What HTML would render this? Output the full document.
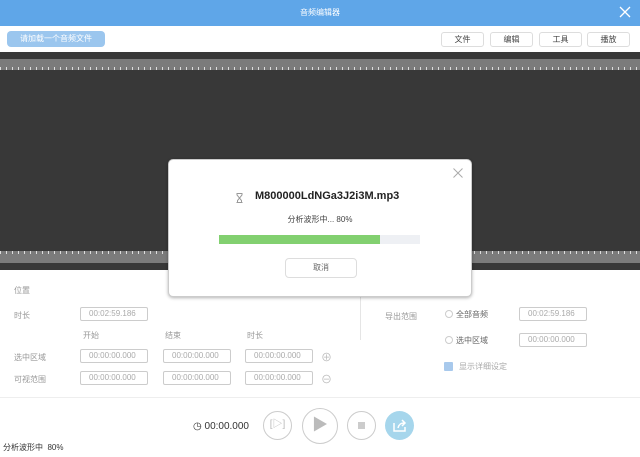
<!DOCTYPE html>
<html><head><meta charset="utf-8"><style>
*{margin:0;padding:0;box-sizing:border-box}
body{width:640px;height:457px;overflow:hidden;background:#fff;font-family:"Liberation Sans","Noto Sans CJK SC",sans-serif;font-size:9px;color:#888;position:relative}
.a{position:absolute}
.inp{position:absolute;height:14px;border:1px solid #ccc;border-radius:2px;font-size:8px;color:#aaa;padding-left:8px;line-height:12px;width:68px}
.btn{position:absolute;top:32px;height:15px;width:43px;border:1px solid #ddd;border-radius:3px;font-size:8px;color:#444;text-align:center;line-height:13px}
.lbl{position:absolute;font-size:8px;color:#999}
.circ{position:absolute;border:1.5px solid #ccc;border-radius:50%}
.tick{position:absolute;left:0;width:640px;height:3px;background:repeating-linear-gradient(90deg,#ddd 0 1px,transparent 1px 6px)}
</style></head><body>
<div class="a" style="left:0;top:0;width:640px;height:26px;background:#5fa6e8"></div>
<div class="a" style="left:0;top:7px;width:640px;text-align:center;color:#fff;font-size:8px">音频编辑器</div>
<svg class="a" style="left:506px;top:7px" width="12" height="12"></svg>
<svg class="a" style="left:619px;top:6px" width="12" height="12"><path d="M1 1L11 11M11 1L1 11" stroke="#fff" stroke-width="1.3"/></svg>
<div class="a" style="left:7px;top:31px;width:98px;height:16px;background:#9bc6ee;border-radius:4px;color:#fff;font-size:8px;text-align:center;line-height:16px">请加载一个音频文件</div>
<div class="btn" style="left:441px">文件</div>
<div class="btn" style="left:490px">编辑</div>
<div class="btn" style="left:539px">工具</div>
<div class="btn" style="left:587px">播放</div>
<div class="a" style="left:0;top:52px;width:640px;height:218px;background:#383838"></div>
<div class="a" style="left:0;top:59px;width:640px;height:11px;background:#7b7b7b"></div>
<div class="tick" style="top:67px"></div>
<div class="a" style="left:0;top:251px;width:640px;height:12px;background:#7b7b7b"></div>
<div class="tick" style="top:251px"></div>
<div class="lbl" style="left:14px;top:285px">位置</div>
<div class="lbl" style="left:14px;top:310px">时长</div>
<div class="inp" style="left:80px;top:307px">00:02:59.186</div>
<div class="lbl" style="left:83px;top:330px">开始</div>
<div class="lbl" style="left:165px;top:330px">结束</div>
<div class="lbl" style="left:247px;top:330px">时长</div>
<div class="lbl" style="left:14px;top:352px">选中区域</div>
<div class="lbl" style="left:14px;top:374px">可视范围</div>
<div class="inp" style="left:80px;top:349px">00:00:00.000</div>
<div class="inp" style="left:163px;top:349px">00:00:00.000</div>
<div class="inp" style="left:245px;top:349px">00:00:00.000</div>
<div class="inp" style="left:80px;top:371px">00:00:00.000</div>
<div class="inp" style="left:163px;top:371px">00:00:00.000</div>
<div class="inp" style="left:245px;top:371px">00:00:00.000</div>
<div class="a" style="left:321px;top:349px;color:#bbb;font-size:11px">⊕</div>
<div class="a" style="left:321px;top:371px;color:#bbb;font-size:11px">⊖</div>
<div class="a" style="left:360px;top:285px;width:1px;height:55px;background:#e5e5e5"></div>
<div class="lbl" style="left:385px;top:311px">导出范围</div>
<div class="a" style="left:445px;top:310px;width:8px;height:8px;border:1px solid #ccc;border-radius:50%"></div>
<div class="a" style="left:456px;top:309px;font-size:8px;color:#666">全部音频</div>
<div class="inp" style="left:519px;top:307px">00:02:59.186</div>
<div class="a" style="left:445px;top:336px;width:8px;height:8px;border:1px solid #ccc;border-radius:50%"></div>
<div class="a" style="left:456px;top:335px;font-size:8px;color:#666">选中区域</div>
<div class="inp" style="left:519px;top:333px">00:00:00.000</div>
<div class="a" style="left:444px;top:362px;width:9px;height:9px;background:#a8c9ec;border-radius:1px"></div>
<div class="a" style="left:459px;top:361px;font-size:8px;color:#aaa">显示详细设定</div>
<div class="a" style="left:0;top:397px;width:640px;height:1px;background:#eee"></div>
<div class="a" style="left:193px;top:421px;font-size:10px;color:#333">◷ 00:00.000</div>
<div class="circ" style="left:263px;top:411px;width:29px;height:29px;color:#bbb;font-size:10px;text-align:center;line-height:26px">[▷]</div>
<div class="circ" style="left:302px;top:408px;width:36px;height:36px;color:#bbb;font-size:16px;text-align:center;line-height:33px">▶</div>
<div class="circ" style="left:347px;top:411px;width:29px;height:29px"><div class="a" style="left:10px;top:10px;width:7px;height:7px;background:#ccc"></div></div>
<div class="a" style="left:385px;top:411px;width:29px;height:29px;border-radius:50%;background:#a6d6ec"></div>
<svg class="a" style="left:393px;top:419px" width="14" height="13"><path d="M1 4V12H12V8M5 9C6 5 8 4 11 4M9 1L12 4L9 7" stroke="#fff" stroke-width="1.5" fill="none"/></svg>
<div class="a" style="left:3px;top:442px;font-size:8px;color:#333">分析波形中&nbsp; 80%</div>
<div class="a" style="left:168px;top:159px;width:304px;height:138px;background:#fff;border-radius:5px;border:1px solid #ccc;box-shadow:0 1px 3px rgba(0,0,0,.3)"></div>
<svg class="a" style="left:453px;top:168px" width="10" height="10"><path d="M0.5 0.5L9.5 9.5M9.5 0.5L0.5 9.5" stroke="#aaa" stroke-width="1"/></svg>
<svg class="a" style="left:236px;top:193px" width="7" height="10"><path d="M0.5 0.5H6.5M0.5 9.5H6.5M1 0.5V2L5.5 7.5V9.5M6 0.5V2L1.5 7.5V9.5" stroke="#999" fill="none"/></svg>
<div class="a" style="left:255px;top:190px;font-size:11px;font-weight:bold;color:#222">M800000LdNGa3J2i3M.mp3</div>
<div class="a" style="left:168px;top:214px;width:304px;text-align:center;font-size:8px;color:#444">分析波形中... 80%</div>
<div class="a" style="left:219px;top:235px;width:201px;height:9px;background:#eef0f4"></div>
<div class="a" style="left:219px;top:235px;width:161px;height:9px;background:#82d070"></div>
<div class="a" style="left:285px;top:258px;width:72px;height:20px;border:1px solid #ddd;border-radius:4px;text-align:center;line-height:18px;font-size:8px;color:#666">取消</div>
</body></html>
